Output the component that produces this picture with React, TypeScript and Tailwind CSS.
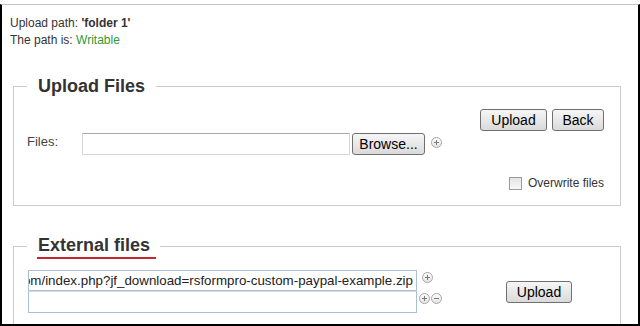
import React from 'react';

const font = { fontFamily: '"Liberation Sans", Arial, sans-serif' };

// small round +/- buttons next to inputs
function RoundIcon({ minus = false }: { minus?: boolean }) {
  return (
    <svg width="11" height="11" viewBox="0 0 11 11" className="shrink-0">
      <defs>
        <linearGradient id={minus ? 'gm' : 'gp'} x1="0" y1="0" x2="0" y2="1">
          <stop offset="0" stopColor="#ffffff" />
          <stop offset="1" stopColor="#e2e2e2" />
        </linearGradient>
      </defs>
      <circle cx="5.5" cy="5.5" r="5" fill={`url(#${minus ? 'gm' : 'gp'})`} stroke="#a8a8a8" />
      <line x1="3" y1="5.5" x2="8" y2="5.5" stroke="#7a7a7a" strokeWidth="1" />
      {!minus && <line x1="5.5" y1="3" x2="5.5" y2="8" stroke="#7a7a7a" strokeWidth="1" />}
    </svg>
  );
}

function Btn({ children, className = '' }: { children: React.ReactNode; className?: string }) {
  return (
    <button
      type="button"
      className={`h-[22px] border border-[#707070] rounded-[3px] bg-linear-to-b from-[#f6f6f6] to-[#dadada] text-[14px] leading-none text-black ${className}`}
    >
      {children}
    </button>
  );
}

export default function App() {
  return (
    <div className="w-[640px] h-[326px] bg-white overflow-hidden" style={font}>
      <div className="mt-[4px] h-[322px] border-t border-t-[#c4c4c4] border-x-2 border-x-black border-b-2 border-b-black overflow-hidden">
        {/* path info */}
        <div className="pt-[10px] pl-[8px] text-[12px] leading-[17px] text-[#333]">
          <div>
            Upload path: <b>'folder 1'</b>
          </div>
          <div>
            The path is: <span className="text-[#339933]">Writable</span>
          </div>
        </div>

        {/* upload files */}
        <fieldset className="mt-[26px] ml-[11px] w-[608px] border border-[#cccccc] p-0">
          <legend className="ml-[13px] px-[11px] text-[18px] leading-[22px] font-bold text-[#333]">
            Upload Files
          </legend>
          <div className="mt-[12px] flex justify-end gap-[5px] pr-[16px]">
            <Btn className="w-[67px]">Upload</Btn>
            <Btn className="w-[52px]">Back</Btn>
          </div>
          <div className="mt-[2px] flex items-center pl-[13px]">
            <span className="w-[55px] text-[13px] text-[#444] -mt-[4px]">Files:</span>
            <div className="w-[268px] h-[22px] border border-[#d6d6d6] border-t-[#a8a8a8]" />
            <Btn className="ml-[2px] w-[73px]">Browse...</Btn>
            <span className="ml-[6px] -mt-[4px] flex">
              <RoundIcon />
            </span>
          </div>
          <div className="mt-[20px] flex items-center justify-end pr-[16px] h-[16px]">
            <span className="w-[13px] h-[13px] border border-[#9a9a9a] bg-linear-to-b from-[#e4e4e4] to-[#f8f8f8]" />
            <span className="ml-[6px] text-[12px] text-[#333]">Overwrite files</span>
          </div>
          <div className="h-[14px]" />
        </fieldset>

        {/* external files */}
        <fieldset className="mt-[28px] ml-[11px] w-[608px] border border-[#cccccc] p-0">
          <legend className="ml-[13px] pl-[10px] pr-[4px] text-[18px] leading-[22px] font-bold text-[#333]">
            <span className="block pl-px pr-[6px] pb-px border-b-2 border-b-[#c1272d]">External files</span>
          </legend>
          <div className="mt-[11px] pl-[14px] flex items-start">
            <div className="w-[414px]">
              <div className="flex items-start">
                <div className="w-[389px] h-[21px] border border-[#a9c0d6] flex justify-end items-center overflow-hidden whitespace-nowrap text-[13.33px] text-[#222] pr-[3px]">
                  http://www.rsjoomla.com/index.php?jf_download=rsformpro-custom-paypal-example.zip
                </div>
                <span className="ml-[5px] mt-[2px] flex">
                  <RoundIcon />
                </span>
              </div>
              <div className="flex items-start">
                <div className="w-[389px] h-[22px] border border-[#a9c0d6] border-t-[#d0dce8]" />
                <span className="ml-[2px] mt-[2px] flex gap-px">
                  <RoundIcon />
                  <RoundIcon minus />
                </span>
              </div>
            </div>
            <Btn className="ml-[64px] mt-[11px] w-[66px]">Upload</Btn>
          </div>
          <div className="h-[20px]" />
        </fieldset>
      </div>
    </div>
  );
}
